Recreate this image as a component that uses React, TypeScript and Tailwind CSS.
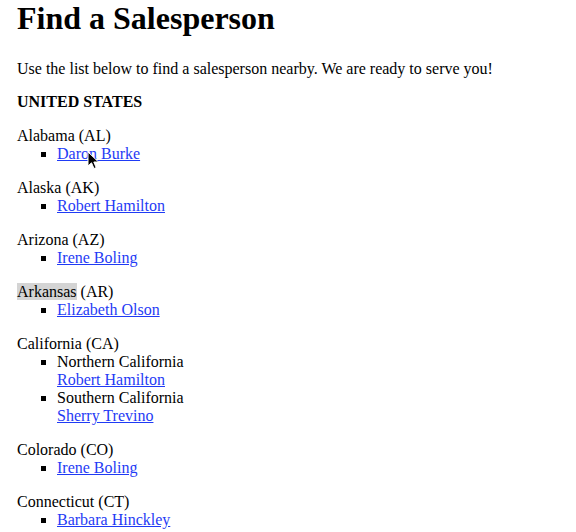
import React from 'react';

type Entry = { region?: string; name: string };
type State = { name: string; code: string; highlight?: boolean; people: Entry[] };

const states: State[] = [
  { name: 'Alabama', code: 'AL', people: [{ name: 'Daron Burke' }] },
  { name: 'Alaska', code: 'AK', people: [{ name: 'Robert Hamilton' }] },
  { name: 'Arizona', code: 'AZ', people: [{ name: 'Irene Boling' }] },
  { name: 'Arkansas', code: 'AR', highlight: true, people: [{ name: 'Elizabeth Olson' }] },
  {
    name: 'California',
    code: 'CA',
    people: [
      { region: 'Northern California', name: 'Robert Hamilton' },
      { region: 'Southern California', name: 'Sherry Trevino' },
    ],
  },
  { name: 'Colorado', code: 'CO', people: [{ name: 'Irene Boling' }] },
  { name: 'Connecticut', code: 'CT', people: [{ name: 'Barbara Hinckley' }] },
];

function Cursor() {
  return (
    <svg className="absolute left-[87px] top-[151px] pointer-events-none" width="13" height="19" viewBox="0 0 13 19">
      <path d="M1 1 L1 15 L4.5 11.8 L7 17.5 L9.2 16.6 L6.8 11 L11.5 11 Z" fill="#000" stroke="#fff" strokeWidth="1" strokeLinejoin="round" />
    </svg>
  );
}

export default function App() {
  return (
    <div className="relative h-[532px] overflow-hidden bg-white px-[17px] text-black" style={{ fontFamily: '"Liberation Serif", "Times New Roman", serif' }}>
      <h1 className="mt-0 mb-[23px] text-[32px] font-bold leading-[37px]">Find a Salesperson</h1>
      <p className="mb-[15px] text-[16px] leading-[18px]">
        Use the list below to find a salesperson nearby. We are ready to serve you!
      </p>
      <p className="mb-4 text-[16px] font-bold leading-[18px]">UNITED STATES</p>

      {states.map((s) => (
        <div key={s.code} className="mb-4 text-[16px] leading-[18px]">
          <div>
            {s.highlight ? <span className="bg-[#d4d4d4]">{s.name}</span> : s.name} ({s.code})
          </div>
          <ul className="list-[square] pl-10">
            {s.people.map((p, i) => (
              <li key={i}>
                {p.region && <div>{p.region}</div>}
                <a href="#" className="text-[#1f3bf5] underline">
                  {p.name}
                </a>
              </li>
            ))}
          </ul>
        </div>
      ))}
      <Cursor />
    </div>
  );
}
